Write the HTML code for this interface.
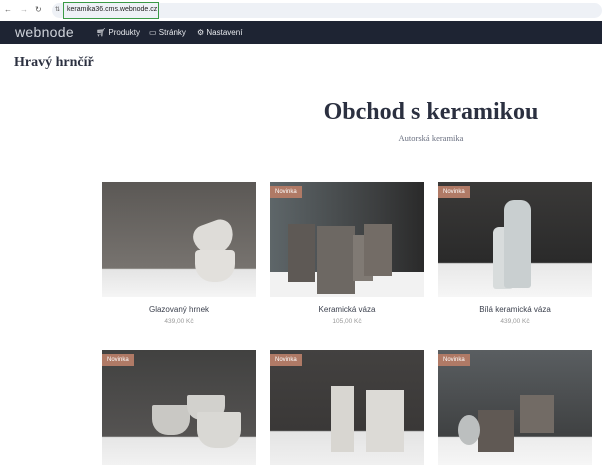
<!DOCTYPE html>
<html><head><meta charset="utf-8"><style>
*{margin:0;padding:0;box-sizing:border-box}
body{width:602px;height:452px;overflow:hidden;background:#fff;font-family:"Liberation Sans",sans-serif;position:relative}
.chrome{position:absolute;left:0;top:0;width:602px;height:21px;background:#fff}
.url{position:absolute;left:52px;top:3px;width:550px;height:15px;background:#eef1f6;border-radius:8px}
.urlbox{position:absolute;left:63px;top:2px;width:96px;height:17px;border:1.5px solid #3a9a45;font-size:7px;color:#222;padding:3px 0 0 3px}
.nav{position:absolute;left:0;top:21px;width:602px;height:23px;background:#1e2433;color:#fff}
.nav .logo{position:absolute;left:15px;top:3px;font-size:14px;color:#cfd3da;letter-spacing:.3px}
.nav span.i{position:absolute;top:7px;font-size:8px;color:#e8eaee}
.site{position:absolute;left:14px;top:55px;font-family:"Liberation Serif",serif;font-weight:bold;font-size:14px;color:#2b3040}
h1{position:absolute;left:300px;width:262px;text-align:center;top:99px;font-family:"Liberation Serif",serif;font-size:24px;color:#2b3040;font-weight:bold}
.sub{position:absolute;left:300px;width:262px;text-align:center;top:133px;font-family:"Liberation Serif",serif;font-size:8.5px;color:#6a7080}
.card{position:absolute;width:154px;height:115px;overflow:hidden}
.badge{position:absolute;left:0;top:4px;background:#b07a66;color:#fff;font-size:6px;padding:3px 5px}
.name{position:absolute;width:154px;text-align:center;font-size:8px;color:#3a3f4c}
.price{position:absolute;width:154px;text-align:center;font-size:6.5px;color:#999}
</style></head><body>
<div class="chrome">
<div style="position:absolute;left:4px;top:5px;font-size:8px;color:#555">←</div>
<div style="position:absolute;left:20px;top:5px;font-size:8px;color:#aaa">→</div>
<div style="position:absolute;left:35px;top:5px;font-size:8px;color:#555">↻</div>
<div class="url"></div>
<div style="position:absolute;left:55px;top:6px;font-size:6px;color:#555">⇅</div>
<div class="urlbox">keramika36.cms.webnode.cz</div>
</div>
<div class="nav">
<div class="logo">webnode</div>
<span class="i" style="left:96px">🛒︎ Produkty</span>
<span class="i" style="left:149px">▭ Stránky</span>
<span class="i" style="left:197px">⚙ Nastavení</span>
</div>
<div class="site">Hravý hrnčíř</div>
<h1>Obchod s keramikou</h1>
<div class="sub">Autorská keramika</div>

<div class="card" style="left:102px;top:182px;background:linear-gradient(#5b5855 0,#77736f 75%,#e4e4e4 76%,#f5f5f5 100%)">
<div style="position:absolute;left:92px;top:40px;width:40px;height:32px;background:#dedcd8;border-radius:12px 12px 20px 20px;transform:rotate(-20deg)"></div>
<div style="position:absolute;left:93px;top:68px;width:40px;height:32px;background:#e2e0dc;border-radius:4px 4px 18px 18px"></div>
</div>
<div class="name" style="left:102px;top:305px">Glazovaný hrnek</div>
<div class="price" style="left:102px;top:318px">439,00 Kč</div>

<div class="card" style="left:270px;top:182px;background:linear-gradient(90deg,#5e6669,#3c3e3f 70%,#2a2a2a);">
<div style="position:absolute;left:0;top:90px;width:154px;height:25px;background:#f2f2f2"></div>
<div style="position:absolute;left:18px;top:42px;width:27px;height:58px;background:#5e5955"></div>
<div style="position:absolute;left:47px;top:44px;width:38px;height:68px;background:#6d6863"></div>
<div style="position:absolute;left:83px;top:53px;width:20px;height:46px;background:#807a74"></div>
<div style="position:absolute;left:94px;top:42px;width:28px;height:52px;background:#736c66"></div>
<div class="badge">Novinka</div>
</div>
<div class="name" style="left:270px;top:305px">Keramická váza</div>
<div class="price" style="left:270px;top:318px">105,00 Kč</div>

<div class="card" style="left:438px;top:182px;background:linear-gradient(#3a3938,#2a2a2a 70%,#e8e8e8 71%,#f6f6f6)">
<div style="position:absolute;left:55px;top:45px;width:20px;height:62px;background:#d8dcdc;border-radius:6px 6px 3px 3px"></div>
<div style="position:absolute;left:66px;top:18px;width:27px;height:88px;background:#c9cfd0;border-radius:10px 10px 3px 3px"></div>
<div class="badge">Novinka</div>
</div>
<div class="name" style="left:438px;top:305px">Bílá keramická váza</div>
<div class="price" style="left:438px;top:318px">439,00 Kč</div>

<div class="card" style="left:102px;top:350px;background:linear-gradient(#414140,#555352 75%,#e6e6e6 76%,#f2f2f2)">
<div style="position:absolute;left:50px;top:55px;width:38px;height:30px;background:#c9c8c4;border-radius:2px 2px 16px 16px"></div>
<div style="position:absolute;left:85px;top:45px;width:38px;height:25px;background:#d2d1cd;border-radius:2px 2px 14px 14px"></div>
<div style="position:absolute;left:95px;top:62px;width:44px;height:36px;background:#d9d8d4;border-radius:2px 2px 18px 18px"></div>
<div class="badge">Novinka</div>
</div>

<div class="card" style="left:270px;top:350px;background:linear-gradient(#434140,#3a3837 70%,#e4e4e4 71%,#f0f0f0)">
<div style="position:absolute;left:61px;top:36px;width:23px;height:66px;background:#d8d6d1"></div>
<div style="position:absolute;left:96px;top:40px;width:38px;height:62px;background:#dcdad6"></div>
<div class="badge">Novinka</div>
</div>

<div class="card" style="left:438px;top:350px;background:linear-gradient(#5a5e61,#3f4142 75%,#ececec 76%,#f6f6f6)">
<div style="position:absolute;left:82px;top:45px;width:34px;height:38px;background:#726b65"></div>
<div style="position:absolute;left:40px;top:60px;width:36px;height:42px;background:#605954"></div>
<div style="position:absolute;left:20px;top:65px;width:22px;height:30px;background:#bcbfbf;border-radius:50%"></div>
<div class="badge">Novinka</div>
</div>
</body></html>
